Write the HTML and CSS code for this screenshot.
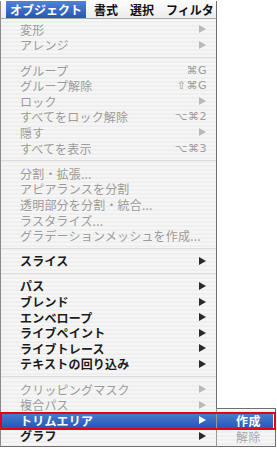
FILE: index.html
```html
<!DOCTYPE html>
<html lang="ja">
<head>
    <meta charset="UTF-8">
    <meta name="viewport" content="width=device-width, initial-scale=1.0">
    <title>オブジェクト メニュー</title>
    <link rel="stylesheet" href="styles.css">
</head>
<body>

    <div class="screen">
        <div class="menubar">
            <span class="title active">オブジェクト</span>
            <span class="title">書式</span>
            <span class="title">選択</span>
            <span class="title last">フィルタ</span>
        </div>

        <div class="menu">
            <div class="item off"><span>変形</span><i class="arrow"></i></div>
            <div class="item off"><span>アレンジ</span><i class="arrow"></i></div>
            <div class="sep"></div>
            <div class="item off"><span>グループ</span><span class="key">⌘G</span></div>
            <div class="item off"><span>グループ解除</span><span class="key">⇧⌘G</span></div>
            <div class="item off"><span>ロック</span><i class="arrow"></i></div>
            <div class="item off"><span>すべてをロック解除</span><span class="key">⌥⌘2</span></div>
            <div class="item off"><span>隠す</span><i class="arrow"></i></div>
            <div class="item off"><span>すべてを表示</span><span class="key">⌥⌘3</span></div>
            <div class="sep"></div>
            <div class="item off"><span>分割・拡張...</span></div>
            <div class="item off"><span>アピアランスを分割</span></div>
            <div class="item off"><span>透明部分を分割・統合...</span></div>
            <div class="item off"><span>ラスタライズ...</span></div>
            <div class="item off"><span>グラデーションメッシュを作成...</span></div>
            <div class="sep"></div>
            <div class="item"><span>スライス</span><i class="arrow"></i></div>
            <div class="sep"></div>
            <div class="item"><span>パス</span><i class="arrow"></i></div>
            <div class="item"><span>ブレンド</span><i class="arrow"></i></div>
            <div class="item"><span>エンベロープ</span><i class="arrow"></i></div>
            <div class="item"><span>ライブペイント</span><i class="arrow"></i></div>
            <div class="item"><span>ライブトレース</span><i class="arrow"></i></div>
            <div class="item"><span>テキストの回り込み</span><i class="arrow"></i></div>
            <div class="sep"></div>
            <div class="item off"><span>クリッピングマスク</span><i class="arrow"></i></div>
            <div class="item off"><span>複合パス</span><i class="arrow"></i></div>
            <div class="item selected"><span>トリムエリア</span><i class="arrow"></i></div>
            <div class="item"><span>グラフ</span><i class="arrow"></i></div>
        </div>

        <div class="submenu">
            <div class="subitem selected">作成</div>
            <div class="subitem off">解除</div>
        </div>

        <div class="callout"></div>
    </div>

</body>
</html>
```

FILE: styles.css
```css
body {
    margin: 0;
    background: white;
    font-family: "Noto Sans CJK JP", "DejaVu Sans", sans-serif;
}
.screen {
    position: relative;
    width: 277px;
    height: 449px;
    overflow: hidden;
}
.menubar {
    width: 217px;
    height: 18px;
    display: flex;
    align-items: stretch;
    padding-left: 5px;
    box-sizing: border-box;
    background: linear-gradient(#fdfdfd, #ececec);
    border-left: 1px solid #8a8a8a;
    border-right: 1px solid #6f6f6f;
    border-bottom: 1px solid #a8a8a8;
    margin-top: 1px;
}
.title {
    flex-shrink: 0;
    white-space: nowrap;
    font-size: 12px;
    font-weight: bold;
    line-height: 17px;
    color: #111;
    padding: 0 6px;
}
.title.last {
    padding-right: 0;
}
.title.active {
    color: white;
    background: linear-gradient(#4f83d6, #2558b6);
    padding: 0 4px 0 4px;
    margin-right: 2px;
}
.menu {
    width: 217px;
    box-sizing: border-box;
    padding: 2.5px 0;
    display: flex;
    flex-direction: column;
    background: repeating-linear-gradient(#f6f6f6 0px, #f6f6f6 2px, #efefef 2px, #efefef 4px);
    border-left: 1px solid #8a8a8a;
    border-right: 1px solid #6f6f6f;
    border-bottom: 1px solid #6f6f6f;
}
.item {
    height: 15.6px;
    display: flex;
    align-items: center;
    justify-content: space-between;
    padding: 0 9px 0 19px;
    font-size: 12px;
    font-weight: bold;
    color: #1c1c1c;
    letter-spacing: 0.2px;
    white-space: nowrap;
}
.item.off {
    font-weight: normal;
    color: #9c9c9c;
}
.item.selected {
    color: white;
    background: linear-gradient(#4a7ed2, #2357b5);
}
.arrow {
    width: 0;
    height: 0;
    border-top: 4px solid transparent;
    border-bottom: 4px solid transparent;
    border-left: 7px solid #2a2a2a;
    margin-right: 1px;
}
.item.off .arrow {
    border-left-color: #b8b8b8;
}
.item.selected .arrow {
    border-left-color: white;
}
.key {
    font-family: "DejaVu Sans", sans-serif;
    font-size: 11px;
    color: #9c9c9c;
    letter-spacing: 0.5px;
}
.sep {
    height: 9.6px;
    display: flex;
    align-items: center;
}
.sep::before {
    content: "";
    flex: 1;
    height: 1px;
    background: #dcdcdc;
}
.submenu {
    position: absolute;
    left: 216px;
    top: 408px;
    width: 60px;
    box-sizing: border-box;
    padding: 4px 0 2px;
    background: repeating-linear-gradient(#f6f6f6 0px, #f6f6f6 2px, #efefef 2px, #efefef 4px);
    border: 1px solid #6f6f6f;
    border-left-color: #9a9a9a;
}
.subitem {
    height: 15.6px;
    line-height: 15.6px;
    padding-left: 19px;
    font-size: 12px;
    font-weight: bold;
    letter-spacing: 0.4px;
}
.subitem.selected {
    color: white;
    background: linear-gradient(#4a7ed2, #2357b5);
    margin-right: 2px;
}
.subitem.off {
    font-weight: normal;
    color: #a6a6a6;
}
.callout {
    position: absolute;
    left: 0;
    top: 412px;
    width: 276px;
    height: 18px;
    box-sizing: border-box;
    border: 2.5px solid #e3001b;
}
```
